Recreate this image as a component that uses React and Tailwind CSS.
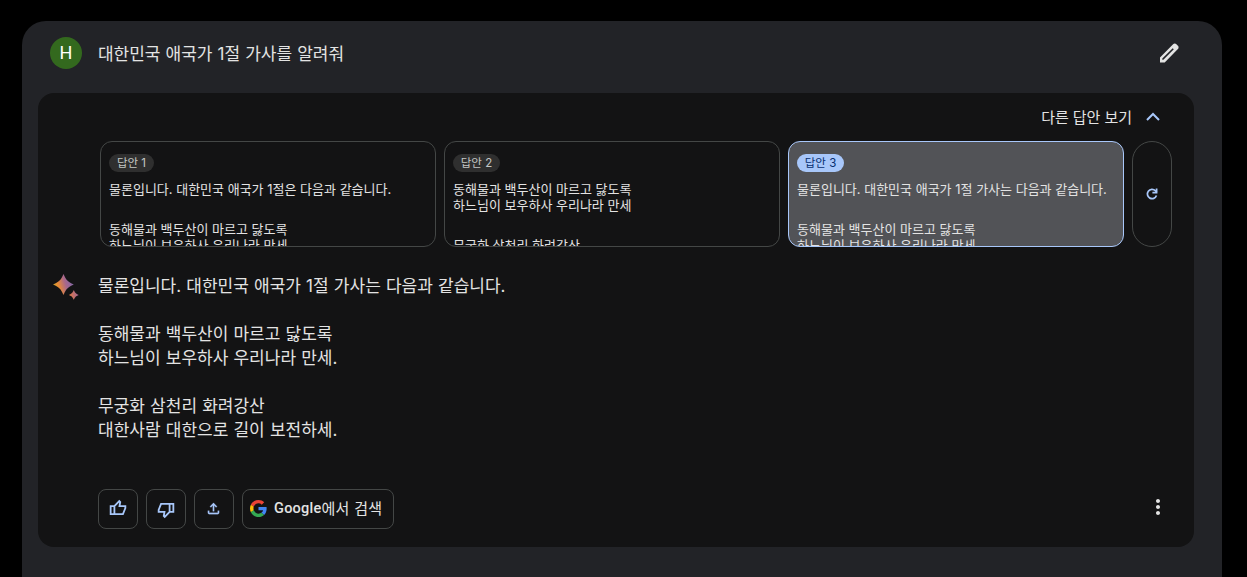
import { MdMoreVert } from "react-icons/md";

const drafts = [
  {
    id: 1,
    pill: "w-[45px]",
    text: ["물론입니다. 대한민국 애국가 1절은 다음과 같습니다.", "", "동해물과 백두산이 마르고 닳도록", "하느님이 보우하사 우리나라 만세"],
  },
  {
    id: 2,
    pill: "w-[47px]",
    text: ["동해물과 백두산이 마르고 닳도록", "하느님이 보우하사 우리나라 만세", "", "무궁화 삼천리 화려강산"],
  },
  {
    id: 3,
    pill: "w-[47px]",
    text: ["물론입니다. 대한민국 애국가 1절 가사는 다음과 같습니다.", "", "동해물과 백두산이 마르고 닳도록", "하느님이 보우하사 우리나라 만세"],
    selected: true,
  },
];

const answer = [
  "물론입니다. 대한민국 애국가 1절 가사는 다음과 같습니다.",
  "",
  "동해물과 백두산이 마르고 닳도록",
  "하느님이 보우하사 우리나라 만세.",
  "",
  "무궁화 삼천리 화려강산",
  "대한사람 대한으로 길이 보전하세.",
];

function EditIcon() {
  return (
    <svg width="24" height="24" viewBox="0 0 24 24" fill="currentColor">
      <path d="M5.300 18.700h1.100L16.800 8.300 15.700 7.200 5.300 17.600V18.700Zm-2.300 2.700v-4.900L16.100 3.200q.3-.3.75-.45.45-.15.9-.15t.9.15q.4.15.75.45L20.900 4.700q.35.35.5.8.15.4.15.9 0 .45-.15.85-.15.45-.5.8L7.700 21.400H3Z" />
    </svg>
  );
}

function ThumbIcon({ className }) {
  return (
    <svg width="18" height="18" viewBox="0 0 24 24" fill="none" stroke="currentColor" strokeWidth="2.4" className={className}>
      <path d="M7.200 20.200V9.400L13.700 2.700 15 4l-1 5.400h7.800v2.800L18.600 20.200H2.200V9.400h5" />
    </svg>
  );
}

function UploadIcon() {
  return (
    <svg width="17" height="17" viewBox="0 0 24 24" fill="currentColor" className="mr-px mb-px">
      <path d="M11 16V7.85l-2.6 2.6L7 9l5-5 5 5-1.4 1.45-2.6-2.6V16h-2Zm-5 4q-.825 0-1.413-.587T4 18v-3h2v3h12v-3h2v3q0 .825-.587 1.413T18 20H6Z" stroke="currentColor" strokeWidth="0.3" />
    </svg>
  );
}

function RefreshIcon() {
  return (
    <svg width="16" height="16" viewBox="0 0 24 24" fill="none" stroke="currentColor" strokeWidth="2.600">
      <path d="M18.700 14.300A7 7 0 1 1 17 7l2 2.200" />
      <path d="M18.900 3.800v6.300h-6.300" />
    </svg>
  );
}

function ChevronUp() {
  return (
    <svg width="16" height="12" viewBox="0 0 16 12" fill="none" stroke="#a8c7fa" strokeWidth="2">
      <path d="m2 9 6-6 6 6" />
    </svg>
  );
}

function Sparkle() {
  return (
    <svg width="28" height="28" viewBox="0 0 28 28">
      <defs>
        <linearGradient id="spark" x1="0" y1="0.7" x2="1" y2="0.4">
          <stop offset="0" stopColor="#c7a92b" />
          <stop offset="0.28" stopColor="#e98a35" />
          <stop offset="0.62" stopColor="#a8678c" />
          <stop offset="1" stopColor="#7d68a8" />
        </linearGradient>
        <linearGradient id="sparkSmall" x1="0" y1="0.6" x2="1" y2="0.4">
          <stop offset="0" stopColor="#e2793f" />
          <stop offset="1" stopColor="#a0669a" />
        </linearGradient>
      </defs>
      <path fill="url(#spark)" d="M11.500 1C14.500 7.500 15.500 8.500 21.800 11.500 15.500 14.500 14.500 15.500 11.500 22 8.500 15.500 7.500 14.500 1 11.500 7.500 8.500 8.500 7.500 11.500 1Z" />
      <path fill="url(#sparkSmall)" d="M21.800 17c1.300 2.900 2 3.600 4.900 4.900-2.900 1.300-3.600 2-4.900 4.900-1.300-2.900-2-3.600-4.900-4.900 2.900-1.300 3.600-2 4.900-4.900Z" />
    </svg>
  );
}

function GoogleLogo() {
  return (
    <svg width="17" height="17" viewBox="0 0 48 48" className="mb-px">
      <path fill="#EA4335" d="M24 9.500c3.540 0 6.710 1.220 9.210 3.600l6.850-6.850C35.900 2.380 30.470 0 24 0 14.620 0 6.510 5.380 2.560 13.220l7.980 6.190C12.430 13.720 17.740 9.500 24 9.500z" />
      <path fill="#4285F4" d="M46.980 24.550c0-1.570-.15-3.090-.38-4.550H24v9.020h12.940c-.58 2.960-2.260 5.480-4.780 7.180l7.730 6c4.510-4.180 7.090-10.360 7.090-17.650z" />
      <path fill="#FBBC05" d="M10.530 28.590c-.48-1.450-.76-2.990-.76-4.590s.27-3.140.76-4.590l-7.980-6.190C.92 16.460 0 20.120 0 24c0 3.880.92 7.540 2.560 10.780l7.970-6.190z" />
      <path fill="#34A853" d="M24 48c6.480 0 11.930-2.130 15.890-5.810l-7.730-6c-2.150 1.450-4.920 2.300-8.160 2.300-6.260 0-11.570-4.220-13.470-9.910l-7.980 6.190C6.510 42.620 14.620 48 24 48z" />
    </svg>
  );
}

function DraftCard({ draft }) {
  return (
    <div
      className={`h-[106px] w-[336px] shrink-0 overflow-hidden rounded-xl border px-2 pt-3 ${
        draft.selected ? "border-[#a8c7fa] bg-[#525357]" : "border-[#444746]"
      }`}
    >
      <div
        className={`flex h-[18px] items-center justify-center rounded-full text-[11.5px] leading-[18px] ${draft.pill} ${
          draft.selected ? "bg-[#a8c7fa] text-[#062e6f]" : "bg-[#2f2f2f] text-[#c4c7c5]"
        }`}
      >
        답안 {draft.id}
      </div>
      <div className="mt-[9px] text-[13px] leading-4 whitespace-nowrap text-[#e3e3e3]">
        {draft.text.map((line, i) => (
          <div key={i} className={line ? "h-4" : "h-6"}>{line}</div>
        ))}
      </div>
    </div>
  );
}

function ActionButton({ children }) {
  return (
    <button className="flex size-10 items-center justify-center rounded-lg border border-[#444746] text-[#a8c7fa]">
      {children}
    </button>
  );
}

export default function App() {
  return (
    <div className="h-[577px] overflow-hidden bg-black pt-[21px] pl-[22px] font-[Inter,'Noto_Sans_CJK_KR',sans-serif] text-[#e3e3e3]">
      <div className="h-[600px] w-[1200px] rounded-3xl bg-[#222327] pl-4">
        <div className="flex h-[72px] items-center pr-[41px] pb-2 pl-3">
          <div className="flex size-8 items-center justify-center rounded-full bg-[#33691e] font-[Roboto,sans-serif] text-lg text-white">
            H
          </div>
          <div className="ml-4 flex-1 pt-0.5 text-[17px] leading-6 tracking-[-0.05px] [word-spacing:0.5px]">대한민국 애국가 1절 가사를 알려줘</div>
          <EditIcon />
        </div>

        <div className="h-[454px] w-[1156px] rounded-2xl bg-[#131314]">
          <div className="flex h-12 items-center justify-end gap-[13px] pr-[33px] text-[15px]">
            <span className="pt-0.5 tracking-[-0.05px]">다른 답안 보기</span>
            <ChevronUp />
          </div>

          <div className="flex gap-2 pl-[62px]">
            {drafts.map((d) => (
              <DraftCard key={d.id} draft={d} />
            ))}
            <button className="flex h-[106px] w-10 shrink-0 items-center justify-center rounded-[20px] border border-[#444746] text-[#a8c7fa]">
              <RefreshIcon />
            </button>
          </div>

          <div className="flex pt-[26px] pl-[14px]">
            <Sparkle />
            <div className="ml-[18px] h-[216px] pt-px text-[17px] leading-6 [word-spacing:0.4px]">
              {answer.map((line, i) => (
                <div key={i} className="h-6">{line}</div>
              ))}
            </div>
          </div>

          <div className="flex items-center gap-2 pr-[24px] pl-[60px]">
            <ActionButton><ThumbIcon className="mb-0.5" /></ActionButton>
            <ActionButton><ThumbIcon className="mt-0.5 rotate-180" /></ActionButton>
            <ActionButton><UploadIcon /></ActionButton>
            <button className="flex h-10 w-[152px] items-center rounded-lg border border-[#444746] pl-[7px] text-sm whitespace-nowrap">
              <GoogleLogo />
              <span className="ml-[7px] font-[Roboto,sans-serif] text-[14.5px] font-medium tracking-[0.25px]">Google</span>
              <span className="text-[15px] tracking-[0.3px]">에서 검색</span>
            </button>
            <MdMoreVert size={24} className="mb-1 ml-auto" />
          </div>
        </div>
      </div>
    </div>
  );
}
